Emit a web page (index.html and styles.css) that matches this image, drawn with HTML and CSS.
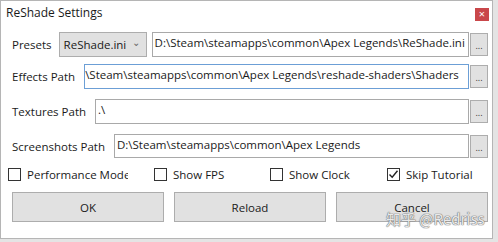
FILE: index.html
```html
<!DOCTYPE html>
<html>
<head>
<meta charset="utf-8">
<link rel="stylesheet" href="styles.css">
</head>
<body>
<div class="dialog">
  <div class="titlebar">
    <span class="title">ReShade Settings</span>
    <span class="close">×</span>
  </div>
  <div class="content">
    <div class="row row1">
      <span class="label">Presets</span>
      <div class="combo"><span>ReShade.ini</span><span class="arrow">⌄</span></div>
      <div class="field">D:\Steam\steamapps\common\Apex Legends\ReShade.ini</div>
      <div class="browse">...</div>
    </div>
    <div class="row row2">
      <span class="label">Effects Path</span>
      <div class="field focused">\Steam\steamapps\common\Apex Legends\reshade-shaders\Shaders</div>
      <div class="browse">...</div>
    </div>
    <div class="row row3">
      <span class="label">Textures Path</span>
      <div class="field">.\</div>
      <div class="browse">...</div>
    </div>
    <div class="row row4">
      <span class="label">Screenshots Path</span>
      <div class="field">D:\Steam\steamapps\common\Apex Legends</div>
      <div class="browse">...</div>
    </div>
    <div class="checks">
      <div class="check c1"><span class="box"></span><span class="ctext clip">Performance Mode</span></div>
      <div class="check c2"><span class="box"></span><span class="ctext">Show FPS</span></div>
      <div class="check c3"><span class="box"></span><span class="ctext">Show Clock</span></div>
      <div class="check c4"><span class="box checked"><svg width="11" height="11" viewBox="0 0 11 11"><path d="M1.5 5.5 L4.2 8.3 L9.5 1.8" fill="none" stroke="#222" stroke-width="1.4"/></svg></span><span class="ctext">Skip Tutorial</span></div>
    </div>
    <div class="buttons">
      <div class="btn">OK</div>
      <div class="btn">Reload</div>
      <div class="btn">Cancel</div>
    </div>
  </div>
  <div class="watermark">知乎 @Redriss</div>
</div>
</body>
</html>
```
FILE: styles.css
```css
html, body {
  margin: 0;
  padding: 0;
}
body {
  width: 498px;
  height: 242px;
  background: #e4e4e4;
  overflow: hidden;
  font-family: "Open Sans", "Noto Sans CJK SC", sans-serif;
  font-size: 11.5px;
  color: #1a1a1a;
}
.dialog {
  position: relative;
  width: 493px;
  height: 239px;
  box-sizing: border-box;
  background: #fff;
  border: 1px solid #b5b5b5;
}
.titlebar {
  height: 31px;
  display: flex;
  align-items: flex-start;
  justify-content: space-between;
}
.title {
  font-size: 12px;
  margin: 3px 0 0 5px;
}
.close {
  width: 14px;
  height: 13px;
  margin: 7px 3px 0 0;
  background: #c9474a;
  color: #fff;
  font-size: 11px;
  line-height: 12px;
  text-align: center;
}
.content {
  padding: 0 0 0 11px;
}
.row {
  display: flex;
  align-items: center;
  height: 25px;
}
.row2 { margin-top: 7px; }
.row3 { margin-top: 10px; }
.row4 { margin-top: 10px; height: 24px; }
.label {
  margin-right: 9px;
  white-space: nowrap;
}
.row1 .label {
  margin-right: 7px;
}
.combo {
  width: 88px;
  height: 25px;
  box-sizing: border-box;
  background: #e1e1e1;
  border: 1px solid #adadad;
  display: flex;
  align-items: center;
  justify-content: space-between;
  padding: 0 6px 0 4px;
  margin-right: 5px;
}
.arrow {
  font-size: 10px;
  color: #666;
  line-height: 1;
  margin-top: -5px;
}
.field {
  flex: 1;
  height: 100%;
  box-sizing: border-box;
  border: 1px solid #a9a9a9;
  padding: 2px 2px 0 2px;
  white-space: nowrap;
  overflow: hidden;
  line-height: 16px;
}
.field.focused {
  border-color: #6c9fd6;
  padding-left: 0;
}
.browse {
  width: 18px;
  height: 23px;
  box-sizing: border-box;
  margin: 0 4px 0 1px;
  background: #e1e1e1;
  border: 1px solid #adadad;
  font-size: 9px;
  text-align: center;
  line-height: 24px;
  color: #333;
}
.checks {
  display: flex;
  align-items: center;
  margin: 9px 0 0 -4px;
  height: 14px;
}
.check {
  display: flex;
  align-items: center;
}
.c1 { width: 146px; }
.c2 { width: 116px; }
.c3 { width: 117px; }
.box {
  width: 13px;
  height: 13px;
  box-sizing: border-box;
  border: 1px solid #333;
  background: #fff;
  margin-right: 6px;
  display: flex;
  align-items: center;
  justify-content: center;
}
.ctext {
  white-space: nowrap;
}
.clip {
  width: 101px;
  overflow: hidden;
}
.buttons {
  display: flex;
  margin-top: 11px;
  gap: 10px;
}
.btn {
  width: 152px;
  height: 30px;
  box-sizing: border-box;
  background: #e1e1e1;
  border: 1px solid #adadad;
  display: flex;
  align-items: center;
  justify-content: center;
}
.watermark {
  position: absolute;
  left: 385px;
  top: 208px;
  font-family: "Noto Sans CJK SC", sans-serif;
  font-size: 15px;
  line-height: 20px;
  color: rgba(255, 255, 255, 0.85);
  text-shadow: 0 0 1px #777, 0 0 1px #777, 0 0 1px #777;
  white-space: nowrap;
}
```
